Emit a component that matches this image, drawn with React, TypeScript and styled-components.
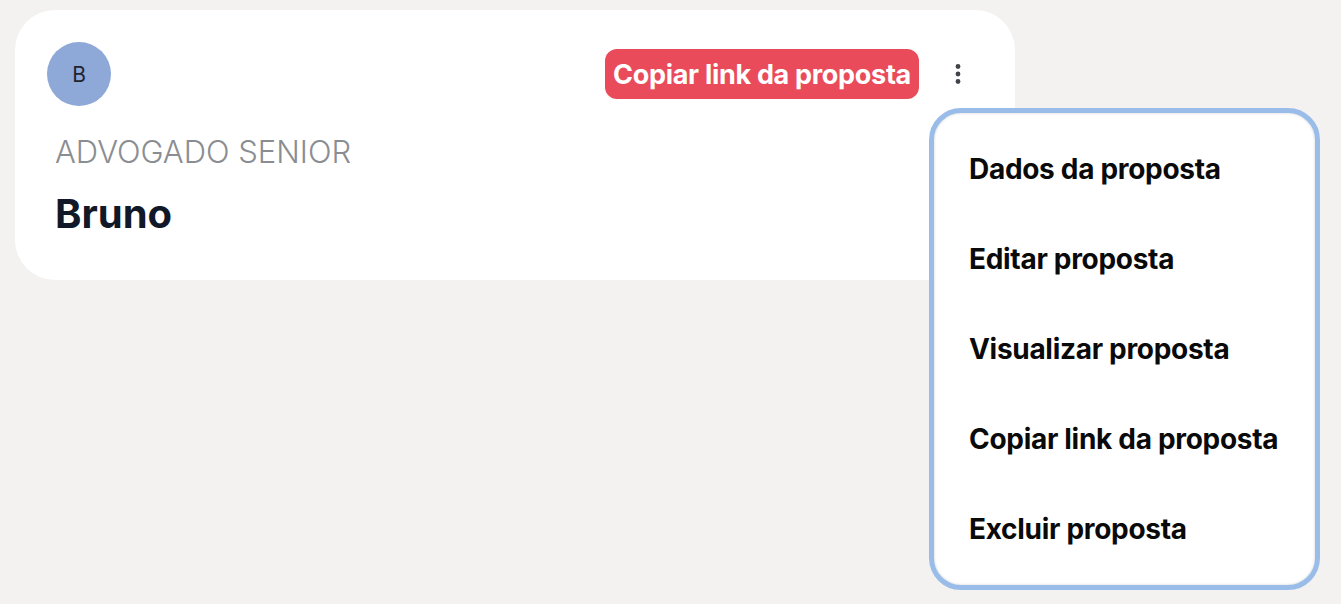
import styled, { createGlobalStyle } from 'styled-components';

const GlobalStyle = createGlobalStyle`
  body {
    margin: 0;
    background: #f3f2f0;
    font-family: 'Inter', 'Noto Sans', sans-serif;
  }
`;

const Page = styled.div`
  padding: 10px 0 0 15px;
  min-height: 594px;
`;

const Card = styled.div`
  position: relative;
  width: 1000px;
  height: 270px;
  box-sizing: border-box;
  background: #ffffff;
  border-radius: 40px;
  padding: 32px 0 0 32px;
`;

const TopRow = styled.div`
  display: flex;
  align-items: center;
  justify-content: space-between;
  padding-right: 45px;
`;

const Avatar = styled.div`
  width: 64px;
  height: 64px;
  border-radius: 50%;
  background: #8ea8d8;
  color: #1e2430;
  display: flex;
  align-items: center;
  justify-content: center;
  font-size: 21px;
`;

const Actions = styled.div`
  display: flex;
  align-items: center;
  gap: 27px;
`;

const CopyButton = styled.button`
  height: 50px;
  padding: 0 8px;
  border: none;
  border-radius: 12px;
  background: #ea4b5a;
  color: #ffffff;
  font-family: inherit;
  font-size: 27px;
  font-weight: 700;
  letter-spacing: -0.3px;
`;

const Kebab = styled.button`
  border: none;
  background: none;
  padding: 0;
  display: flex;
  color: #404449;
`;

const Info = styled.div`
  padding: 27px 0 0 8px;
`;

const Role = styled.div`
  font-size: 31px;
  font-weight: 300;
  color: #8a8d92;
  line-height: 38px;
`;

const Name = styled.div`
  margin-top: 20px;
  font-size: 40px;
  font-weight: 700;
  color: #111827;
  line-height: 46px;
`;

const Menu = styled.ul`
  position: absolute;
  top: 98px;
  left: 914px;
  width: 391px;
  box-sizing: border-box;
  margin: 0;
  padding: 11px 0;
  list-style: none;
  background: #ffffff;
  border: 5px solid #99bde8;
  border-radius: 32px;
  box-shadow: inset 0 0 3px rgba(0, 0, 0, 0.18);
`;

const MenuItem = styled.li`
  height: 90px;
  display: flex;
  align-items: center;
  padding-left: 35px;
  font-size: 28px;
  font-weight: 700;
  color: #0a0a0a;
  letter-spacing: -0.3px;
`;

const items = [
  'Dados da proposta',
  'Editar proposta',
  'Visualizar proposta',
  'Copiar link da proposta',
  'Excluir proposta',
];

export default function App() {
  return (
    <>
      <GlobalStyle />
      <Page>
        <Card>
          <TopRow>
            <Avatar>B</Avatar>
            <Actions>
              <CopyButton>Copiar link da proposta</CopyButton>
              <Kebab aria-label="Mais opções">
                <svg width="24" height="24" viewBox="0 0 24 24" fill="currentColor">
                  <circle cx="12" cy="4.5" r="2.4" />
                  <circle cx="12" cy="12" r="2.4" />
                  <circle cx="12" cy="19.5" r="2.4" />
                </svg>
              </Kebab>
            </Actions>
          </TopRow>
          <Info>
            <Role>ADVOGADO SENIOR</Role>
            <Name>Bruno</Name>
          </Info>
          <Menu>
            {items.map((label) => (
              <MenuItem key={label}>{label}</MenuItem>
            ))}
          </Menu>
        </Card>
      </Page>
    </>
  );
}
